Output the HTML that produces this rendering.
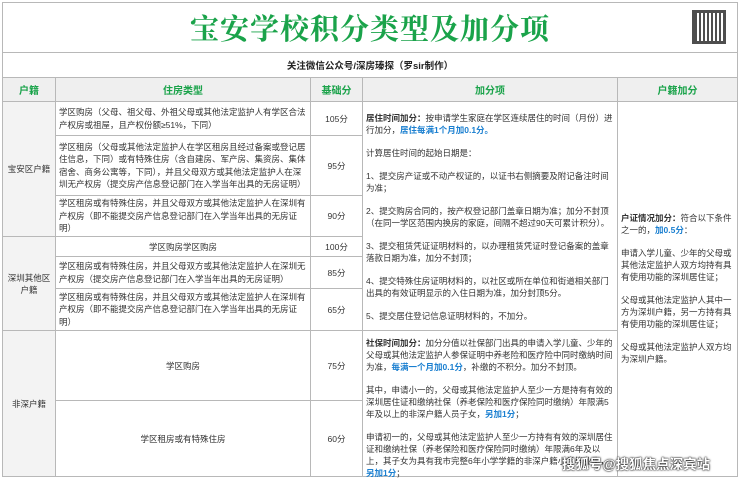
<!DOCTYPE html><html><head><meta charset="utf-8"><style>
body{margin:0;width:740px;height:479px;background:#fff;position:relative;overflow:hidden;font-family:"Liberation Sans","Noto Sans CJK SC",sans-serif;color:#333;font-size:8.5px;}
.a{position:absolute;box-sizing:border-box;}
.b{border:1px solid #b8b8b8;}
.c{display:flex;align-items:center;justify-content:center;text-align:center;}
.l{display:flex;align-items:center;padding:0 3px 0 3px;line-height:12.5px;}
.g{color:#1aa34a;font-weight:bold;}
.bl{color:#1a7fd0;font-weight:bold;}
p{margin:0 0 11px 0;line-height:12px;}
</style></head><body>
<div class="a b" style="left:2px;top:2px;width:736px;height:475px;"></div>
<div class="a c" style="left:2px;top:2px;width:736px;height:50px;font-size:29px;font-weight:bold;color:#1aa34a;font-family:'Noto Serif CJK SC',serif;letter-spacing:1px">宝安学校积分类型及加分项</div>
<div class="a" style="left:692px;top:10px;width:34px;height:34px;background:repeating-linear-gradient(90deg,#222 0 2px,#fff 2px 4px),#222;opacity:.8;border:3px solid #222"></div>
<div class="a b c" style="left:2px;top:52px;width:736px;height:26px;font-weight:bold;font-size:9.5px;color:#222">关注微信公众号/深房瑧探（罗sir制作）</div>
<div class="a b c g" style="left:2px;top:77px;width:54px;height:25px;background:#efefef;font-size:10px">户籍</div>
<div class="a b c g" style="left:55px;top:77px;width:256px;height:25px;background:#efefef;font-size:10px">住房类型</div>
<div class="a b c g" style="left:310px;top:77px;width:53px;height:25px;background:#efefef;font-size:10px">基础分</div>
<div class="a b c g" style="left:362px;top:77px;width:256px;height:25px;background:#efefef;font-size:10px">加分项</div>
<div class="a b c g" style="left:617px;top:77px;width:121px;height:25px;background:#efefef;font-size:10px">户籍加分</div>

<div class="a b c" style="left:2px;top:101px;width:54px;height:136px;background:#f3f3f3">宝安区户籍</div>
<div class="a b c" style="left:2px;top:236px;width:54px;height:95px;background:#f3f3f3">深圳其他区<br>户籍</div>
<div class="a b c" style="left:2px;top:330px;width:54px;height:147px;background:#f3f3f3">非深户籍</div>

<div class="a b l" style="left:55px;top:101px;width:256px;height:35px">学区购房（父母、祖父母、外祖父母或其他法定监护人有学区合法产权房或祖屋，且产权份额≥51%，下同）</div>
<div class="a b l" style="left:55px;top:135px;width:256px;height:61px">学区租房（父母或其他法定监护人在学区租房且经过备案或登记居住信息，下同）或有特殊住房（含自建房、军产房、集资房、集体宿舍、商务公寓等，下同），并且父母双方或其他法定监护人在深圳无产权房（提交房产信息登记部门在入学当年出具的无房证明）</div>
<div class="a b l" style="left:55px;top:195px;width:256px;height:42px">学区租房或有特殊住房，并且父母双方或其他法定监护人在深圳有产权房（即不能提交房产信息登记部门在入学当年出具的无房证明）</div>
<div class="a b c" style="left:55px;top:236px;width:256px;height:21px">学区购房学区购房</div>
<div class="a b l" style="left:55px;top:256px;width:256px;height:33px">学区租房或有特殊住房，并且父母双方或其他法定监护人在深圳无产权房（提交房产信息登记部门在入学当年出具的无房证明）</div>
<div class="a b l" style="left:55px;top:288px;width:256px;height:43px">学区租房或有特殊住房，并且父母双方或其他法定监护人在深圳有产权房（即不能提交房产信息登记部门在入学当年出具的无房证明）</div>
<div class="a b c" style="left:55px;top:330px;width:256px;height:71px">学区购房</div>
<div class="a b c" style="left:55px;top:400px;width:256px;height:77px">学区租房或有特殊住房</div>

<div class="a b c" style="left:310px;top:101px;width:53px;height:35px">105分</div>
<div class="a b c" style="left:310px;top:135px;width:53px;height:61px">95分</div>
<div class="a b c" style="left:310px;top:195px;width:53px;height:42px">90分</div>
<div class="a b c" style="left:310px;top:236px;width:53px;height:21px">100分</div>
<div class="a b c" style="left:310px;top:256px;width:53px;height:33px">85分</div>
<div class="a b c" style="left:310px;top:288px;width:53px;height:43px">65分</div>
<div class="a b c" style="left:310px;top:330px;width:53px;height:71px">75分</div>
<div class="a b c" style="left:310px;top:400px;width:53px;height:77px">60分</div>

<div class="a b" style="left:362px;top:101px;width:256px;height:230px;padding:10px 3px 0 3px">
<p><b>居住时间加分：</b>按申请学生家庭在学区连续居住的时间（月份）进行加分，<span class="bl">居住每满1个月加0.1分。</span></p>
<p>计算居住时间的起始日期是：</p>
<p>1、提交房产证或不动产权证的，以证书右侧摘要及附记备注时间为准；</p>
<p>2、提交购房合同的，按产权登记部门盖章日期为准；加分不封顶（在同一学区范围内换房的家庭，间隔不超过90天可累计积分）。</p>
<p>3、提交租赁凭证证明材料的，以办理租赁凭证时登记备案的盖章落款日期为准，加分不封顶；</p>
<p>4、提交特殊住房证明材料的，以社区或所在单位和街道相关部门出具的有效证明显示的入住日期为准，加分封顶5分。</p>
<p>5、提交居住登记信息证明材料的，不加分。</p></div>
<div class="a b" style="left:362px;top:330px;width:256px;height:147px;padding:6px 3px 0 3px">
<p><b>社保时间加分：</b>加分分值以社保部门出具的申请入学儿童、少年的父母或其他法定监护人参保证明中养老险和医疗险中同时缴纳时间为准，<span class="bl">每满一个月加0.1分</span>，补缴的不积分。加分不封顶。</p>
<p>其中，申请小一的，父母或其他法定监护人至少一方是持有有效的深圳居住证和缴纳社保（养老保险和医疗保险同时缴纳）年限满5年及以上的非深户籍人员子女，<span class="bl">另加1分</span>；</p>
<p>申请初一的，父母或其他法定监护人至少一方持有有效的深圳居住证和缴纳社保（养老保险和医疗保险同时缴纳）年限满6年及以上，其子女为具有我市完整6年小学学籍的非深户籍小学毕业生，<span class="bl">另加1分</span>；</p></div>

<div class="a b" style="left:617px;top:101px;width:121px;height:376px;padding:110px 3px 0 3px">
<p><b>户证情况加分：</b>符合以下条件之一的，<span class="bl">加0.5分</span>：</p>
<p>申请入学儿童、少年的父母或其他法定监护人双方均持有具有使用功能的深圳居住证；</p>
<p>父母或其他法定监护人其中一方为深圳户籍，另一方持有具有使用功能的深圳居住证；</p>
<p>父母或其他法定监护人双方均为深圳户籍。</p></div>

<div class="a" style="left:562px;top:453px;font-size:13.5px;font-weight:bold;color:#fff;text-shadow:0 0 2px #000,0 0 1px #000;white-space:nowrap">搜狐号@搜狐焦点深宾站</div>
</body></html>
